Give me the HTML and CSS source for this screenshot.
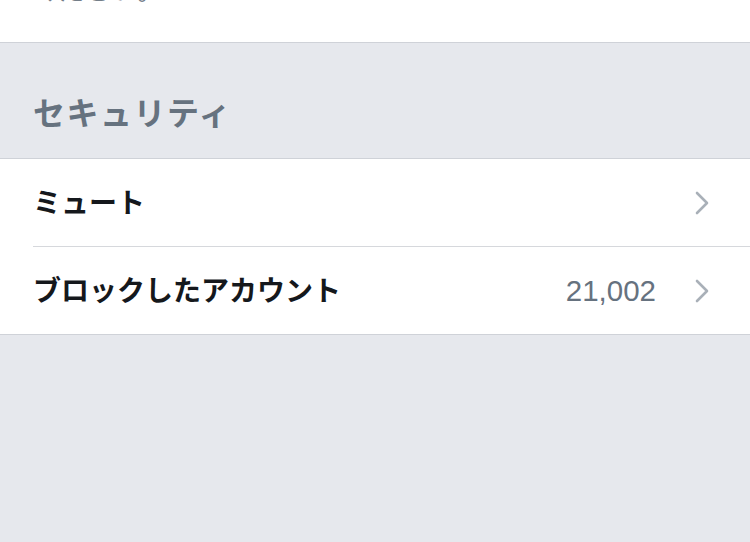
FILE: index.html
```html
<!DOCTYPE html>
<html lang="ja">
<head>
  <meta charset="UTF-8">
  <title>設定</title>
  <link rel="stylesheet" href="styles.css">
</head>
<body>

  <div class="note">
    <p>ください。</p>
  </div>

  <h2 class="section-title">セキュリティ</h2>

  <ul class="list">
    <li class="row">
      <span class="label">ミュート</span>
      <svg class="chevron" viewBox="0 0 16 26" width="16" height="26"><path d="M3 3 L13 13 L3 23" /></svg>
    </li>
    <li class="row">
      <span class="label">ブロックしたアカウント</span>
      <span class="value">21,002</span>
      <svg class="chevron" viewBox="0 0 16 26" width="16" height="26"><path d="M3 3 L13 13 L3 23" /></svg>
    </li>
  </ul>

</body>
</html>
```

FILE: styles.css
```css
html, body {
  margin: 0;
  height: 100%;
}

body {
  background: #e6e8ed;
  font-family: "Noto Sans CJK JP", "Noto Sans", sans-serif;
  overflow: hidden;
}

/* tail end of the description above, scrolled mostly out of view */
.note {
  background: #fff;
  height: 42px;
  border-bottom: 1px solid #cfd2d8;
  overflow: hidden;
}

.note p {
  margin: 0;
  padding-left: 33px;
  font-size: 26px;
  line-height: 32px;
  color: #747e89;
  transform: translateY(-27px);
}

.section-title {
  margin: 0;
  height: 116px;
  padding: 20px 0 0 33px;
  display: flex;
  align-items: center;
  box-sizing: border-box;
  font-size: 32px;
  font-weight: 700;
  color: #66727f;
  letter-spacing: 1.5px;
  border-bottom: 1px solid #cfd2d8;
}

.list {
  list-style: none;
  margin: 0;
  padding: 0 0 0 33px;
  background: #fff;
  border-bottom: 1px solid #cfd2d8;
}

.row {
  height: 87px;
  display: flex;
  align-items: center;
  padding-right: 40px;
}

.row + .row {
  border-top: 1px solid #d6d8dc;
}

.label {
  flex: 1;
  font-size: 28px;
  font-weight: 700;
  color: #15181c;
  margin-top: -3px;
}

.value {
  font-family: "Liberation Sans", Arial, sans-serif;
  font-size: 29.5px;
  color: #66727f;
  margin-right: 38px;
}

.chevron {
  fill: none;
  stroke: #a9b0b8;
  stroke-width: 2.6;
  stroke-linecap: round;
  stroke-linejoin: round;
}
```
